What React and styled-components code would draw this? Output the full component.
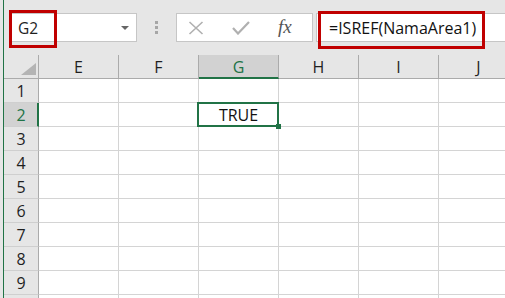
import React from "react";
import styled, { createGlobalStyle } from "styled-components";

const Global = createGlobalStyle`
  html, body { margin: 0; padding: 0; background: #ffffff; }
  * { box-sizing: border-box; }
`;

const GREEN = "#217346";
const FONT = `"Open Sans", "Liberation Sans", sans-serif`;

const Page = styled.div`
  width: 505px;
  height: 298px;
  overflow: hidden;
  display: flex;
  background: #e6e6e6;
  font-family: ${FONT};
`;

const LeftStrip = styled.div`
  width: 3px;
  flex: none;
  background: #e6e6e6;
`;

const Main = styled.div`
  flex: 1;
  min-width: 0;
  border-left: 1px solid ${GREEN};
  display: flex;
  flex-direction: column;
`;

const Toolbar = styled.div`
  height: 55px;
  flex: none;
  display: flex;
  align-items: flex-start;
  padding: 13px 0 0 7px;
`;

const NameBox = styled.div`
  position: relative;
  width: 126px;
  height: 29px;
  flex: none;
  background: #ffffff;
  border: 1px solid #c6c6c6;
  display: flex;
  align-items: center;
  padding-left: 6px;
  font-size: 15.5px;
  color: #1f1f1f;
`;

const DropArrow = styled.span`
  margin-left: auto;
  margin-right: 7px;
  width: 0;
  height: 0;
  border-left: 4px solid transparent;
  border-right: 4px solid transparent;
  border-top: 4px solid #666666;
`;

const Highlight = styled.div`
  position: absolute;
  left: ${(p) => p.$left}px;
  top: ${(p) => p.$top}px;
  width: ${(p) => p.$w}px;
  height: ${(p) => p.$h}px;
  border: 3px solid #c00000;
  pointer-events: none;
`;

const Dots = styled.div`
  margin: 8px 0 0 18px;
  display: flex;
  flex-direction: column;
  gap: 2px;
`;

const Dot = styled.span`
  width: 3px;
  height: 3px;
  background: #a6a6a6;
`;

const ButtonBox = styled.div`
  margin-left: 18px;
  width: 137px;
  height: 29px;
  flex: none;
  background: #ffffff;
  border: 1px solid #c6c6c6;
  display: flex;
  align-items: center;
  padding-left: 11px;
  gap: 28px;
`;

const Fx = styled.span`
  font-family: "Liberation Serif", serif;
  font-style: italic;
  font-size: 19px;
  color: #555555;
  line-height: 1;
  margin-top: -2px;
`;

const FormulaBox = styled.div`
  position: relative;
  margin-left: 3px;
  flex: 1;
  height: 29px;
  background: #ffffff;
  border: 1px solid #c6c6c6;
  border-right: none;
  display: flex;
  align-items: center;
  padding-left: 12px;
  font-size: 16px;
  color: #111111;
`;

const Grid = styled.div`
  display: grid;
  grid-template-columns: 35px repeat(6, 80px);
  grid-auto-rows: 24px;
  background: #ffffff;
`;

const Corner = styled.div`
  background: #e6e6e6;
  border-right: 1px solid #ababab;
  border-bottom: 1px solid #ababab;
  display: flex;
  align-items: flex-end;
  justify-content: flex-end;
  padding: 0 2px 3px 0;
`;

const CornerTri = styled.span`
  width: 0;
  height: 0;
  border-left: 15px solid transparent;
  border-bottom: 12px solid #b4b4b4;
`;

const ColHeader = styled.div`
  background: ${(p) => (p.$sel ? "#d2d2d2" : "#e6e6e6")};
  border-right: 1px solid #ababab;
  border-bottom: ${(p) => (p.$sel ? `2px solid ${GREEN}` : "1px solid #ababab")};
  display: flex;
  align-items: center;
  justify-content: center;
  font-size: 16px;
  color: ${(p) => (p.$sel ? GREEN : "#1f1f1f")};
  padding-top: ${(p) => (p.$sel ? "1px" : "0")};
`;

const RowHeader = styled.div`
  background: ${(p) => (p.$sel ? "#d2d2d2" : "#e6e6e6")};
  border-right: ${(p) => (p.$sel ? `2px solid ${GREEN}` : "1px solid #ababab")};
  border-bottom: 1px solid #cfcfcf;
  display: flex;
  align-items: center;
  justify-content: center;
  font-size: 16px;
  color: ${(p) => (p.$sel ? GREEN : "#1f1f1f")};
  padding-left: ${(p) => (p.$sel ? "1px" : "0")};
`;

const Cell = styled.div`
  position: ${(p) => (p.$active ? "relative" : "static")};
  z-index: ${(p) => (p.$active ? 2 : "auto")};
  border-right: 1px solid #d4d4d4;
  border-bottom: 1px solid #d4d4d4;
  display: flex;
  align-items: center;
  justify-content: center;
  font-size: 16px;
  color: #111111;
`;

const ActiveBox = styled.div`
  position: absolute;
  top: -1px;
  left: -2px;
  right: -1px;
  bottom: -1px;
  border: 2px solid ${GREEN};
  pointer-events: none;
`;

const FillHandle = styled.div`
  position: absolute;
  right: -3px;
  bottom: -3px;
  width: 5px;
  height: 5px;
  background: ${GREEN};
`;

const cols = ["E", "F", "G", "H", "I", "J"];
const rows = [1, 2, 3, 4, 5, 6, 7, 8, 9, 10];

function CancelIcon() {
  return (
    <svg width="16" height="14" viewBox="0 0 16 14">
      <path d="M1.5 1 L14.5 13 M14.5 1 L1.5 13" stroke="#b0b0b0" strokeWidth="1.6" fill="none" />
    </svg>
  );
}

function EnterIcon() {
  return (
    <svg width="18" height="14" viewBox="0 0 18 14">
      <path d="M1 7 L6 12.5 L17 1" stroke="#b0b0b0" strokeWidth="2.2" fill="none" />
    </svg>
  );
}

export default function App() {
  return (
    <>
      <Global />
      <Page>
        <LeftStrip />
        <Main>
          <Toolbar>
            <NameBox>
              G2
              <DropArrow />
              <Highlight $left={-3} $top={-4} $w={48} $h={38} />
            </NameBox>
            <Dots>
              <Dot />
              <Dot />
              <Dot />
            </Dots>
            <ButtonBox>
              <CancelIcon />
              <EnterIcon />
              <Fx>fx</Fx>
            </ButtonBox>
            <FormulaBox>
              =ISREF(NamaArea1)
              <Highlight $left={1} $top={-3} $w={167} $h={38} />
            </FormulaBox>
          </Toolbar>
          <Grid>
            <Corner>
              <CornerTri />
            </Corner>
            {cols.map((c) => (
              <ColHeader key={c} $sel={c === "G"}>
                {c}
              </ColHeader>
            ))}
            {rows.map((r) => (
              <React.Fragment key={r}>
                <RowHeader $sel={r === 2}>{r < 10 ? r : ""}</RowHeader>
                {cols.map((c) => {
                  const active = r === 2 && c === "G";
                  return (
                    <Cell key={c} $active={active}>
                      {active && "TRUE"}
                      {active && <ActiveBox />}
                      {active && <FillHandle />}
                    </Cell>
                  );
                })}
              </React.Fragment>
            ))}
          </Grid>
        </Main>
      </Page>
    </>
  );
}
